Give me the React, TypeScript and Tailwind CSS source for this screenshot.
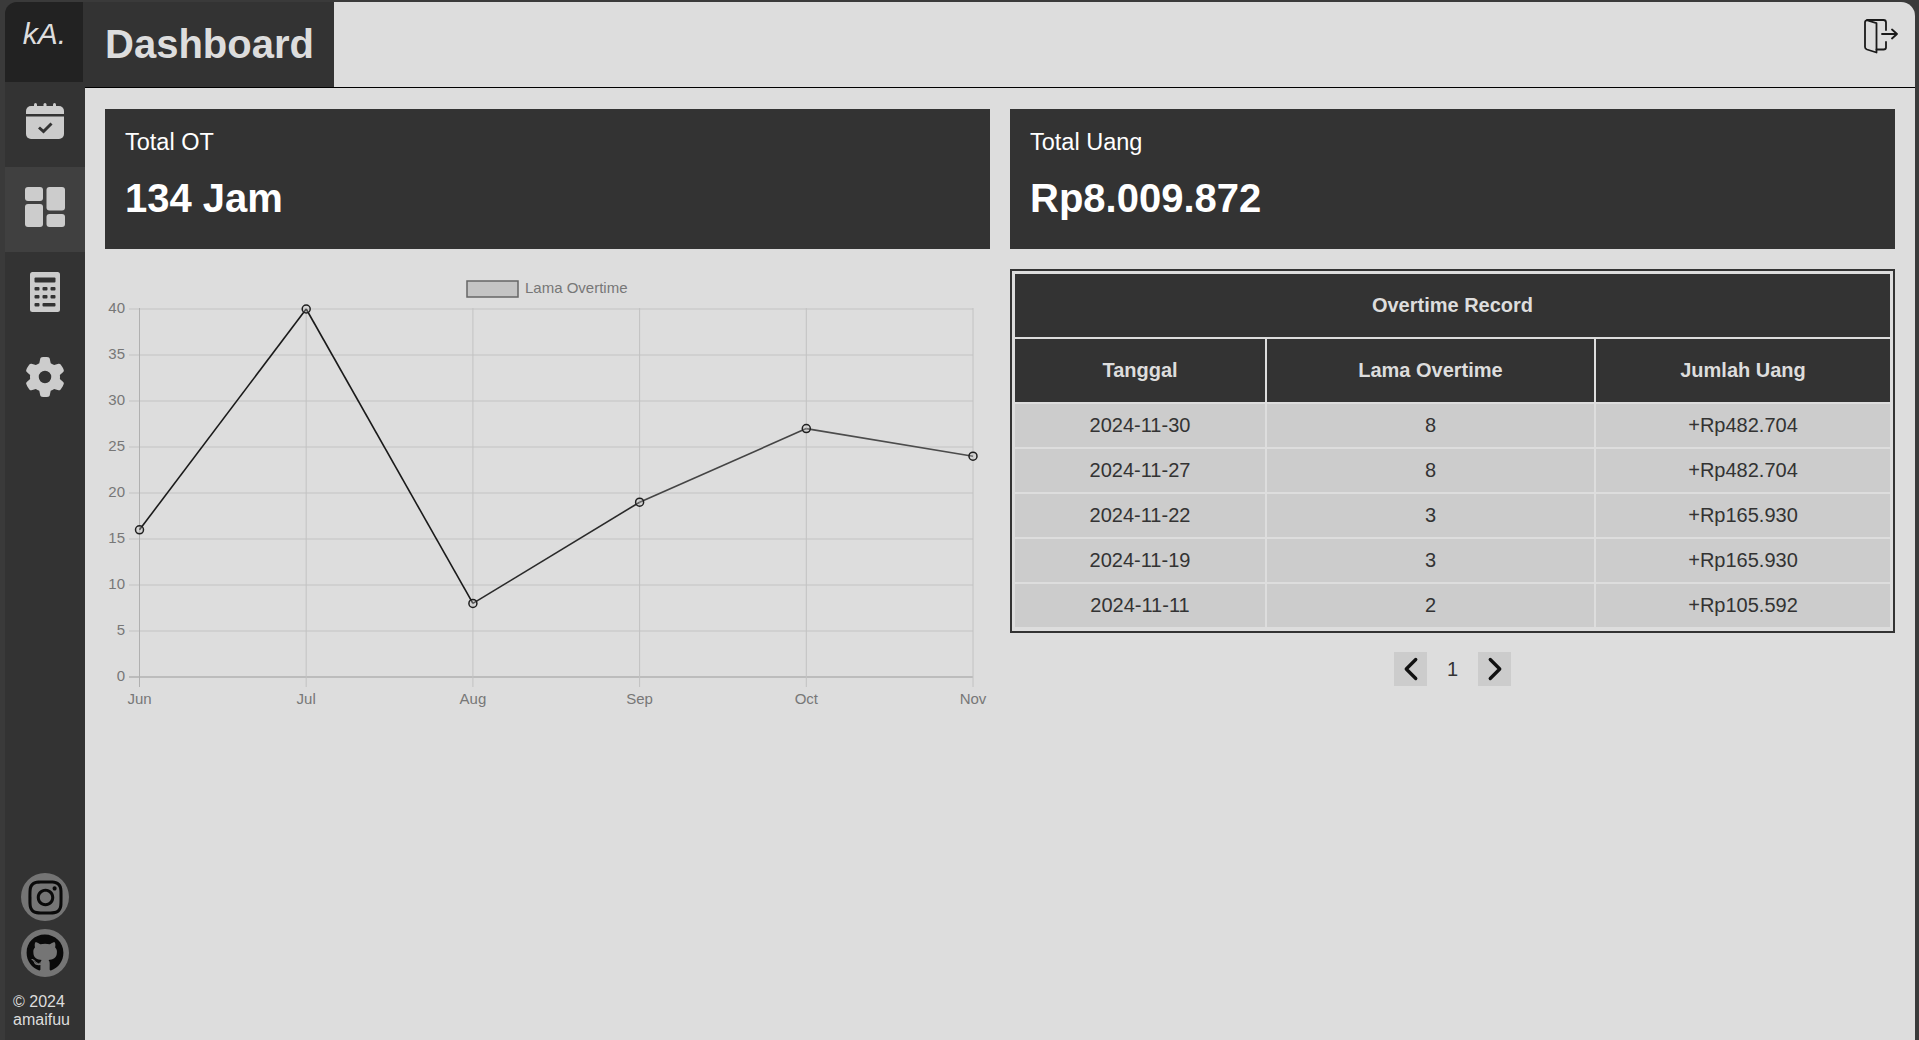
import { ChevronLeft, ChevronRight } from 'lucide-react'
import { FaGear, FaGithub, FaInstagram } from 'react-icons/fa6'

const records = [
  { date: '2024-11-30', hours: 8, amount: '+Rp482.704' },
  { date: '2024-11-27', hours: 8, amount: '+Rp482.704' },
  { date: '2024-11-22', hours: 3, amount: '+Rp165.930' },
  { date: '2024-11-19', hours: 3, amount: '+Rp165.930' },
  { date: '2024-11-11', hours: 2, amount: '+Rp105.592' },
]

// chart geometry, in page pixels (the svg viewBox starts at the chart's corner)
const months = ['Jun', 'Jul', 'Aug', 'Sep', 'Oct', 'Nov']
const values = [16, 40, 8, 19, 27, 24]
const ticks = [40, 35, 30, 25, 20, 15, 10, 5, 0]
const xAt = (i: number) => 139.5 + i * 166.7
const yAt = (v: number) => 677 - v * 9.2
const segmentColors = ['#1a1a1a', '#1a1a1a', '#2a2a2a', '#444444', '#4c4c4c']

function OvertimeChart() {
  return (
    <svg width="885" height="450" viewBox="105 269 885 450" className="block">
      <rect x="467" y="281" width="51" height="16" fill="#c4c4c4" stroke="#666666" strokeWidth="1.5" />
      <text x="525" y="292.500" fontSize="15" fill="#777777">Lama Overtime</text>
      {ticks.map(t => (
        <g key={t}>
          <line x1="129" x2="973" y1={yAt(t)} y2={yAt(t)} stroke={t === 0 ? '#b0b0b0' : '#c4c4c4'} strokeWidth={t === 0 ? 1.5 : 1.2} />
          <text x="125" y={yAt(t) + 4} fontSize="15" fill="#777777" textAnchor="end">{t}</text>
        </g>
      ))}
      {months.map((m, i) => (
        <g key={m}>
          <line x1={xAt(i)} x2={xAt(i)} y1="308" y2="687" stroke={i === 0 ? '#b0b0b0' : '#c2c2c2'} />
          <text x={xAt(i)} y="704" fontSize="15" fill="#777777" textAnchor="middle">{m}</text>
        </g>
      ))}
      {values.slice(1).map((v, i) => (
        <line key={i} x1={xAt(i)} y1={yAt(values[i])} x2={xAt(i + 1)} y2={yAt(v)} stroke={segmentColors[i]} strokeWidth="1.6" />
      ))}
      {values.map((v, i) => (
        <circle key={i} cx={xAt(i)} cy={yAt(v)} r="4" fill="#c4c4c4" fillOpacity="0.3" stroke="#1f1f1f" strokeWidth="1.5" />
      ))}
    </svg>
  )
}

function CalendarIcon() {
  return (
    <svg width="38" height="38" viewBox="0 0 38 38" fill="#cccccc">
      <rect x="8" y="0" width="3" height="6" rx="1.5" />
      <rect x="17.5" y="0" width="3" height="6" rx="1.5" />
      <rect x="27" y="0" width="3" height="6" rx="1.5" />
      <path d="M5 3h28a5 5 0 0 1 5 5v3H0V8a5 5 0 0 1 5-5Z" />
      <path d="M0 13.5h38V31a5 5 0 0 1-5 5H5a5 5 0 0 1-5-5Z" />
      <path d="M13 24.500l4.500 4 8-8" fill="none" stroke="#333333" strokeWidth="3" />
    </svg>
  )
}

function DashboardIcon() {
  return (
    <svg width="40" height="40" viewBox="0 0 40 40" fill="#cccccc">
      <rect x="0" y="0" width="18" height="14" rx="3" />
      <rect x="0" y="17" width="18" height="23" rx="3" />
      <rect x="21.5" y="0" width="18.5" height="23.5" rx="3" />
      <rect x="21.5" y="27" width="18.5" height="13" rx="3" />
    </svg>
  )
}

function CalculatorIcon() {
  return (
    <svg width="30" height="40" viewBox="0 0 30 40">
      <rect width="30" height="40" rx="2.5" fill="#cccccc" />
      <rect x="4.5" y="5.5" width="21" height="5" rx="1" fill="#333333" />
      {[15, 23, 31].map(y =>
        [4.5, 12.5, 20.5].map(x =>
          y === 31 && x > 4.5 ? null : <rect key={`${x}-${y}`} x={x} y={y} width="5" height="3.6" rx="1" fill="#333333" />,
        ),
      )}
      <rect x="12.5" y="31" width="13" height="3.6" rx="1" fill="#333333" />
    </svg>
  )
}

function LogoutIcon() {
  return (
    <svg width="34" height="36" viewBox="0 0 34 36" fill="none" stroke="#1a1a1a" strokeWidth="1.8" strokeLinejoin="round" strokeLinecap="round">
      <path d="M1 3.500c0-1.500 1-2.500 2.500-2l9 2.700V33.500l-9.500-3C1.700 30 1 29 1 28Z" />
      <path d="M3 1h16.500c1.500 0 2.500 1 2.500 2.500V11" />
      <path d="M22 23v5.500c0 1.500-1 2-2.500 2H12.500" />
      <path d="M18 15h15M28 10.500l5 4.500-5 4.500" />
    </svg>
  )
}

function SocialLink({ children }: { children: React.ReactNode }) {
  return (
    <div className="flex h-[48px] w-[48px] items-center justify-center rounded-full bg-[#757575] text-[#0a0a0a]">
      {children}
    </div>
  )
}

function StatCard({ label, value }: { label: string; value: string }) {
  return (
    <div className="h-[140px] bg-[#333333] px-5 pt-[17px] text-white">
      <p className="text-[23.5px] leading-[32px]">{label}</p>
      <p className="mt-[15px] text-[40px] leading-[50px] font-bold">{value}</p>
    </div>
  )
}

export default function App() {
  return (
    <div className="flex h-screen w-full overflow-hidden bg-[#3a3a3a] pt-[2px] pr-[4px] pl-[5px] font-['Liberation_Sans',sans-serif]">
      <aside className="flex w-[80px] shrink-0 flex-col rounded-tl-[12px] bg-[#333333]">
        <div className="flex h-[80px] w-[78px] justify-center rounded-tl-[12px] bg-[#222222] pt-[16px] pl-px text-[30px] leading-[32px] text-[#dddddd] italic">
          kA.
        </div>
        <div className="flex h-[85px] items-center justify-center pb-[5px]">
          <CalendarIcon />
        </div>
        <div className="flex h-[85px] items-center justify-center bg-[#404040] pb-[6px]">
          <DashboardIcon />
        </div>
        <div className="flex h-[85px] items-center justify-center pb-[5px]">
          <CalculatorIcon />
        </div>
        <div className="flex h-[85px] items-center justify-center pb-[5px] text-[#cccccc]">
          <FaGear size={40} />
        </div>
        <div className="mt-auto flex flex-col items-center gap-2">
          <SocialLink>
            <FaInstagram size={39} />
          </SocialLink>
          <SocialLink>
            <FaGithub size={38} />
          </SocialLink>
        </div>
        <p className="mt-[16px] mb-[11px] pl-2 text-base leading-[18px] text-[#dddddd]">
          © 2024
          <br />
          amaifuu
        </p>
      </aside>

      <main className="flex min-w-0 flex-1 flex-col rounded-tr-[14px] bg-[#dddddd]">
        <header className="flex h-[86px] shrink-0 justify-between border-b border-black">
          <div className="flex h-[85px] w-[249px] items-center bg-[#333333] pb-[2px] pl-5 text-[40px] font-bold text-[#dddddd]">
            Dashboard
          </div>
          <div className="pt-[17px] pr-[17px]">
            <LogoutIcon />
          </div>
        </header>

        <div className="grid grid-cols-2 gap-x-5 gap-y-5 px-5 pt-[21px]">
          <StatCard label="Total OT" value="134 Jam" />
          <StatCard label="Total Uang" value="Rp8.009.872" />

          <OvertimeChart />

          <div>
            <div className="border-2 border-[#333333] p-px pb-[2px]">
              <table className="w-full table-fixed border-separate border-spacing-[2px] text-center text-[20px]">
                <colgroup>
                  <col className="w-[250px]" />
                  <col className="w-[327px]" />
                  <col />
                </colgroup>
                <thead className="font-bold text-[#dddddd]">
                  <tr>
                    <th colSpan={3} className="h-[63px] bg-[#333333] pb-[2px]">Overtime Record</th>
                  </tr>
                  <tr>
                    <th className="h-[63px] bg-[#333333] pb-[2px]">Tanggal</th>
                    <th className="bg-[#333333] pb-[2px]">Lama Overtime</th>
                    <th className="bg-[#333333] pb-[2px]">Jumlah Uang</th>
                  </tr>
                </thead>
                <tbody className="text-[#333333]">
                  {records.map(r => (
                    <tr key={r.date}>
                      <td className="h-[43px] bg-[#cccccc] pb-[2px]">{r.date}</td>
                      <td className="bg-[#cccccc] pb-[2px]">{r.hours}</td>
                      <td className="bg-[#cccccc] pb-[2px]">{r.amount}</td>
                    </tr>
                  ))}
                </tbody>
              </table>
            </div>

            <div className="mt-[19px] flex items-center justify-center text-[#333333]">
              <button className="flex h-[34px] w-[33px] items-center justify-center bg-[#cccccc] text-[#111111]">
                <ChevronLeft size={38} strokeWidth={2.1} className="shrink-0" />
              </button>
              <span className="w-[51px] text-center text-[20px]">1</span>
              <button className="flex h-[34px] w-[33px] items-center justify-center bg-[#cccccc] text-[#111111]">
                <ChevronRight size={38} strokeWidth={2.1} className="shrink-0" />
              </button>
            </div>
          </div>
        </div>
      </main>
    </div>
  )
}
